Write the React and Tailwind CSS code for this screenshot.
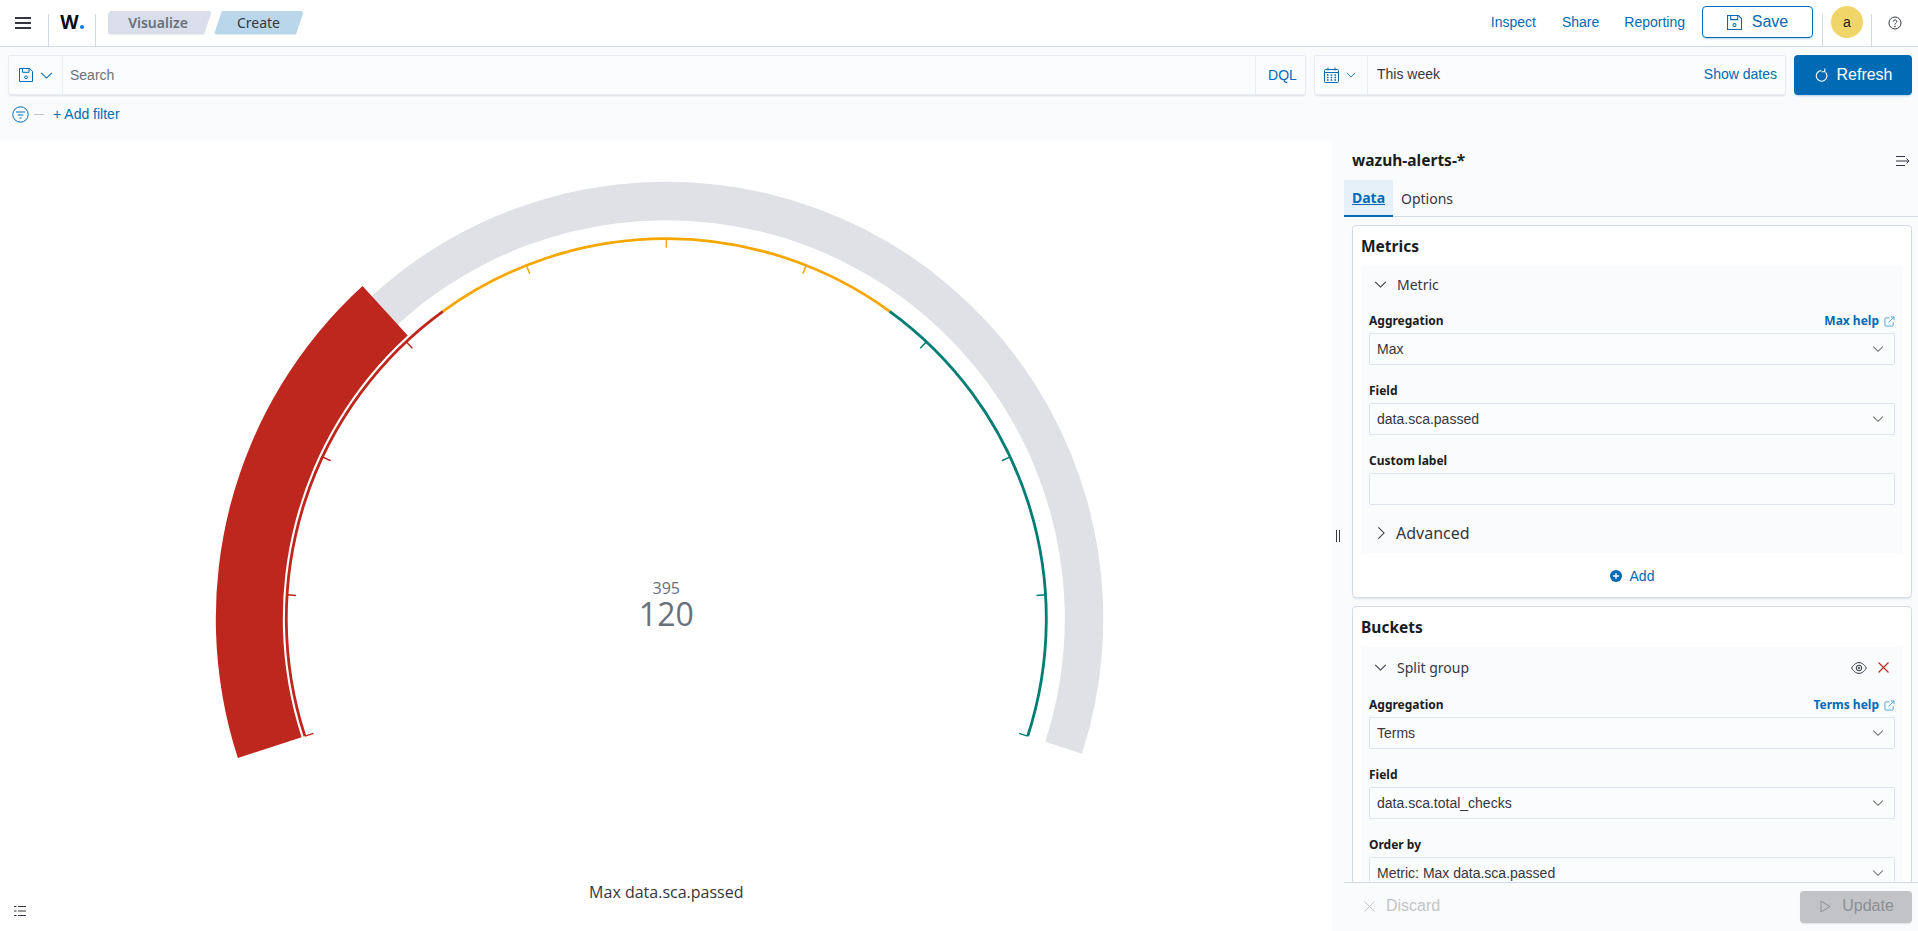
import React from "react";

const BLUE = "#006bb4";
const cx = 666.3, cy = 618.7;
const pt = (r, d) => {
  const a = (d * Math.PI) / 180;
  return [cx + r * Math.sin(a), cy - r * Math.cos(a)];
};
const arc = (r, a, b) => {
  const [x1, y1] = pt(r, a);
  const [x2, y2] = pt(r, b);
  return `M${x1} ${y1}A${r} ${r} 0 ${b - a > 180 ? 1 : 0} 1 ${x2} ${y2}`;
};
const band = (r1, r2, a, b) => {
  const [x1, y1] = pt(r2, a);
  const [x2, y2] = pt(r2, b);
  const [x3, y3] = pt(r1, b);
  const [x4, y4] = pt(r1, a);
  const l = b - a > 180 ? 1 : 0;
  return `M${x1} ${y1}A${r2} ${r2} 0 ${l} 1 ${x2} ${y2}L${x3} ${y3}A${r1} ${r1} 0 ${l} 0 ${x4} ${y4}Z`;
};
const RED = "#bd271e", ORANGE = "#f5a700", GREEN = "#017d73";
const ticks = [-108, -86.4, -64.8, -43.2, -21.6, 0, 21.6, 43.2, 64.8, 86.4, 108];
const tickColor = (d) => (d < -36 ? RED : d > 36 ? GREEN : ORANGE);

function Gauge() {
  return (
    <svg viewBox="0 140 1332 791" className="block w-full h-full">
      <path d={band(398.5, 437, -108, 108)} fill="#dfe1e6" />
      <path d={band(383.5, 450.5, -108, -42.4)} fill={RED} />
      <path d={arc(380, -108, -36)} stroke={RED} strokeWidth="2.8" fill="none" />
      <path d={arc(380, -36, 36)} stroke={ORANGE} strokeWidth="2.8" fill="none" />
      <path d={arc(380, 36, 108)} stroke={GREEN} strokeWidth="2.8" fill="none" />
      {ticks.map((d) => {
        const [x1, y1] = pt(380, d);
        const [x2, y2] = pt(371, d);
        return <line key={d} x1={x1} y1={y1} x2={x2} y2={y2} stroke={tickColor(d)} strokeWidth="1.5" />;
      })}
      <text x={cx} y="593.5" textAnchor="middle" fontFamily="'Open Sans',sans-serif" fontSize="16" fill="#69707d">395</text>
      <text x={cx} y="626" textAnchor="middle" fontFamily="'Open Sans',sans-serif" fontSize="32" fill="#69707d">120</text>
      <text x={cx} y="897.5" textAnchor="middle" fontFamily="'Open Sans',sans-serif" fontSize="16" fill="#343741">Max data.sca.passed</text>
    </svg>
  );
}

const Chevron = ({ className = "", color = "#343741", w = 12 }) => (
  <svg width={w} height={w} viewBox="0 0 16 16" fill="none" className={className}>
    <path d="M1.5 4.8 8 11.2l6.5-6.4" stroke={color} strokeWidth="1.3" />
  </svg>
);
const ChevronRight = () => (
  <svg width="14" height="14" viewBox="0 0 16 16" fill="none">
    <path d="M5 1.5 11.5 8 5 14.5" stroke="#343741" strokeWidth="1.2" />
  </svg>
);
const SaveIcon = ({ size = 14, color = BLUE }) => (
  <svg width={size} height={size} viewBox="0 0 14 14" fill="none" stroke={color} strokeWidth="1">
    <path d="M.5.5h10.2l2.8 2.8v10.2H.5z" />
    <path d="M3.5.5v3.8h6.5V.5" />
    <circle cx="7" cy="9.3" r="1.4" />
  </svg>
);
const External = () => (
  <svg width="11" height="11" viewBox="0 0 12 12" fill="none" stroke="#4d9fd6" strokeWidth="1">
    <path d="M6 2H2a1 1 0 0 0-1 1v7a1 1 0 0 0 1 1h7a1 1 0 0 0 1-1V7" />
    <path d="M5 7l6-6M7.5 1H11v3.5" />
  </svg>
);

const Label = ({ children, help }) => (
  <div className="flex items-center justify-between h-[20px] mb-[2px]">
    <span className="text-[12px] font-bold leading-[18px] text-[#1a1c21]">{children}</span>
    {help && (
      <span className="flex items-center gap-[5px] text-[12px] font-bold leading-[18px] text-[#006bb4]">
        {help} <External />
      </span>
    )}
  </div>
);

const Select = ({ value, className = "" }) => (
  <div className={`flex items-center justify-between h-[32px] border border-[#dfe5ef] rounded-[2px] bg-[#fbfcfd] pl-[7px] pr-[10px] font-['Liberation_Sans'] text-[14px] text-[#343741] ${className}`}>
    <span>{value}</span>
    {value !== null && <Chevron w={12} />}
  </div>
);

const Field = ({ label, help, value, last }) => (
  <div className={last ? "" : "mb-[16px]"}>
    <Label help={help}>{label}</Label>
    <Select value={value} />
  </div>
);

function Header() {
  return (
    <header className="h-[47px] shrink-0 flex items-stretch border-b border-[#d3dae6] bg-white">
      <div className="w-[48px] flex items-center justify-center pr-[2px]">
        <svg width="16" height="14" viewBox="0 0 16 14" fill="#343741">
          <rect y="1" width="16" height="2" /><rect y="6" width="16" height="2" /><rect y="11" width="16" height="2" />
        </svg>
      </div>
      <div className="w-[48px] mt-[14px] border-x border-[#d3dae6] flex items-start justify-center">
        <span className="-mt-[4px] text-[19px] leading-[24px] font-bold text-[#0b0c10] font-['Open_Sans']">W<span className="inline-block w-[4px] h-[4px] rounded-full bg-[#0a7cf0] ml-[1px]"></span></span>
      </div>
      <nav className="flex items-center ml-[12px] -mt-[1px] gap-[2px]">
        <span className="h-[24px] w-[104px] rounded-[4px] bg-[#d9deea] text-[#69707d] text-[14px] font-semibold flex items-center justify-center pr-[4px] [clip-path:polygon(0_0,100%_0,calc(100%-8px)_100%,0_100%)]">Visualize</span>
        <span className="h-[24px] w-[90px] rounded-[4px] bg-[#b9d6ea] text-[#343741] text-[14px] flex items-center justify-center pr-[1px] [clip-path:polygon(8px_0,100%_0,calc(100%-8px)_100%,0_100%)]">Create</span>
      </nav>
      <div className="flex-1" />
      <div className="flex items-center font-['Liberation_Sans'] text-[14px] text-[#006bb4] -mt-[2px]">
        <span className="mr-[26px]">Inspect</span>
        <span className="mr-[25px]">Share</span>
        <span className="mr-[17px]">Reporting</span>
        <span className="w-[111px] h-[32px] border border-[#006bb4] rounded-[4px] flex items-center justify-center gap-[10px] text-[16px] shadow-[0_2px_2px_-1px_rgba(0,107,180,0.3)]">
          <SaveIcon size={15} /> Save
        </span>
      </div>
      <div className="ml-[9px] w-[50px] mt-[14px] border-x border-[#d3dae6] flex items-start justify-center">
        <span className="-mt-[8px] w-[32px] h-[32px] rounded-full bg-[#f0d669] flex items-center justify-center font-['Liberation_Sans'] text-[14px] text-[#1a1c21]">a</span>
      </div>
      <div className="w-[46px] flex items-center justify-center -mt-[1px]">
        <svg width="14" height="14" viewBox="0 0 14 14" fill="none" stroke="#343741" strokeWidth="1">
          <circle cx="7" cy="7" r="6" />
          <path d="M5.2 5.6C5.2 3.4 8.8 3.4 8.8 5.5 8.8 6.9 7 6.9 7 8.6" />
          <circle cx="7" cy="10.3" r=".4" />
        </svg>
      </div>
    </header>
  );
}

function QueryBar() {
  return (
    <div className="h-[93px] shrink-0 bg-[#fafbfd] pl-[8px] pr-[6px] pt-[8px] font-['Liberation_Sans'] text-[14px]">
      <div className="flex items-stretch h-[40px]">
        <div className="w-[1298px] flex items-stretch border border-[#e9edf3] rounded-[2px] bg-[#fbfcfd] shadow-[0_2px_2px_-1px_rgba(152,162,179,0.3)]">
          <div className="w-[54px] flex items-center justify-center gap-[7px] pl-[1px] border-r border-[#e9edf3]">
            <SaveIcon size={14} />
            <Chevron color={BLUE} w={13} />
          </div>
          <span className="flex-1 flex items-center pl-[7px] text-[#69707d]">Search</span>
          <span className="w-[50px] flex items-center justify-center pl-[4px] border-l border-[#e9edf3] text-[#006bb4]">DQL</span>
        </div>
        <div className="ml-[8px] w-[472px] flex items-stretch border border-[#e9edf3] rounded-[2px] bg-[#fbfcfd] shadow-[0_2px_2px_-1px_rgba(152,162,179,0.3)]">
          <div className="w-[53px] flex items-center justify-center gap-[7px] pr-[2px] border-r border-[#e9edf3]">
            <svg width="15" height="16" viewBox="0 0 15 16" fill="none" stroke={BLUE} strokeWidth="1">
              <rect x=".5" y="2.5" width="14" height="13" rx="1" />
              <path d="M.5 5.5h14M4 .5v3M11 .5v3" />
              <path d="M3 8h1.5M6.7 8h1.5M10.5 8H12M3 10.5h1.5M6.7 10.5h1.5M10.5 10.5H12M3 13h1.5M6.7 13h1.5M10.5 13H12" strokeWidth="1.4" />
            </svg>
            <Chevron color={BLUE} w={10} />
          </div>
          <span className="flex-1 flex items-center pl-[9px] pb-[2px] text-[#343741]">This week</span>
          <span className="flex items-center pr-[8px] pb-[2px] text-[#006bb4]">Show dates</span>
        </div>
        <div className="ml-[8px] w-[118px] pl-[2px] rounded-[4px] bg-[#006bb4] text-white text-[16px] flex items-center justify-center gap-[8px] shadow-[0_2px_2px_-1px_rgba(0,107,180,0.3)]">
          <svg width="13" height="14" viewBox="0 0 13 14" fill="none" stroke="#fff" strokeWidth="1.1">
            <path d="M10.6 4.4A5.3 5.3 0 1 1 6.2 2.6" />
            <path d="M9.8.6v3.2H6.6" />
          </svg>
          Refresh
        </div>
      </div>
      <div className="flex items-center h-[20px] mt-[9px] pl-[4px] text-[#006bb4]">
        <svg width="17" height="17" viewBox="0 0 17 17" fill="none" stroke={BLUE} strokeWidth="1">
          <circle cx="8.5" cy="8.5" r="7.7" />
          <path d="M4 6h9M5.7 9h5.6M7.4 12h2.2" />
        </svg>
        <span className="ml-[5px] w-[10px] h-[1px] bg-[#c2c8d2]" />
        <span className="ml-[9px]">+ Add filter</span>
      </div>
    </div>
  );
}

function Panel() {
  return (
    <aside className="relative w-[586px] shrink-0 flex flex-col bg-[#fafbfd]">
      <span className="absolute left-[4px] top-[390px] w-[4px] h-[12px] border-x border-[#343741]" />
      <div className="flex-1 min-h-0 overflow-hidden">
        <div className="h-[40px] pl-[20px] pr-[7px] pt-[1px] flex items-center justify-between">
          <span className="text-[15.5px] font-bold text-[#1a1c21]">wazuh-alerts-*</span>
          <svg width="15" height="12" viewBox="0 0 15 12" fill="none" stroke="#343741" strokeWidth="1">
            <path d="M0 1.5h9M0 6h13M0 10.5h9M10.5 3.5 13 6l-2.5 2.5" />
          </svg>
        </div>
        <div className="ml-[12px] h-[37px] flex items-stretch border-b border-[#d3dae6]">
          <span className="w-[49px] h-[37px] flex items-center justify-center bg-[#e6f0f8] border-b-2 border-[#006bb4] text-[14px] font-bold underline text-[#006bb4]">Data</span>
          <span className="ml-[8px] flex items-center text-[14px] text-[#343741]">Options</span>
        </div>

        <div className="ml-[20px] mr-[6px] mt-[8px] bg-white border border-[#d3dae6] rounded-[4px] shadow-[0_2px_2px_-1px_rgba(152,162,179,0.3)] px-[8px]">
          <h3 className="h-[40px] pt-[1px] flex items-center text-[15.5px] font-bold text-[#1a1c21]">Metrics</h3>
          <div className="bg-[#fafbfd] rounded-[4px] px-[8px]">
            <div className="h-[38px] pb-[2px] flex items-center gap-[10px] pl-[5px] text-[14px] text-[#343741]">
              <Chevron w={13} /> Metric
            </div>
            <div className="pt-[7px]">
              <Field label="Aggregation" help="Max help" value="Max" />
              <Field label="Field" value="data.sca.passed" />
              <Label>Custom label</Label>
              <Select value={null} />
            </div>
            <div className="h-[38px] pb-[2px] mt-[10px] flex items-center gap-[8px] pl-[5px] text-[16px] text-[#343741]">
              <ChevronRight /> Advanced
            </div>
          </div>
          <div className="h-[44px] pt-[2px] flex items-center justify-center gap-[8px] font-['Liberation_Sans'] text-[14px] text-[#006bb4]">
            <svg width="12" height="12" viewBox="0 0 12 12">
              <circle cx="6" cy="6" r="6" fill={BLUE} />
              <path d="M6 3v6M3 6h6" stroke="#fff" strokeWidth="1.3" />
            </svg>
            Add
          </div>
        </div>

        <div className="ml-[20px] mr-[6px] mt-[8px] bg-white border border-[#d3dae6] rounded-[4px] px-[8px]">
          <h3 className="h-[40px] pt-[1px] flex items-center text-[15.5px] font-bold text-[#1a1c21]">Buckets</h3>
          <div className="bg-[#fafbfd] rounded-[4px] px-[8px]">
            <div className="h-[41px] flex items-center justify-between pl-[5px] pr-[6px] text-[14px] text-[#343741]">
              <span className="flex items-center gap-[10px]"><Chevron w={13} /> Split group</span>
              <span className="flex items-center gap-[11px]">
                <svg width="16" height="12" viewBox="0 0 16 12" fill="none" stroke="#343741" strokeWidth="1">
                  <path d="M.6 6C3 2.2 5.4.6 8 .6s5 1.6 7.4 5.4c-2.4 3.8-4.8 5.4-7.4 5.4S3 9.8.6 6z" />
                  <circle cx="8" cy="6" r="2.8" />
                  <circle cx="8" cy="6" r=".9" />
                </svg>
                <svg width="11" height="11" viewBox="0 0 11 11" stroke="#bd271e" strokeWidth="1.1"><path d="M.5.5l10 10M10.5.5l-10 10" /></svg>
              </span>
            </div>
            <div className="pt-[7px]">
              <Field label="Aggregation" help="Terms help" value="Terms" />
              <Field label="Field" value="data.sca.total_checks" />
              <Field label="Order by" value="Metric: Max data.sca.passed" />
            </div>
          </div>
        </div>
      </div>
      <div className="ml-[12px] h-[49px] shrink-0 border-t border-[#d3dae6] bg-[#fafbfd] flex items-center justify-between pr-[6px] font-['Liberation_Sans'] text-[16px]">
        <span className="flex items-center gap-[11px] pl-[20px] pb-[2px] text-[#c2c3c6]">
          <svg width="11" height="11" viewBox="0 0 11 11" stroke="#c2c3c6" strokeWidth="1"><path d="M.5.5l10 10M10.5.5l-10 10" /></svg>
          Discard
        </span>
        <span className="w-[112px] h-[32px] pb-[2px] pl-[2px] rounded-[4px] bg-[#c2c3c6] text-[#8b8f96] flex items-center justify-center gap-[11px] shadow-[0_2px_2px_-1px_rgba(152,162,179,0.3)]">
          <svg width="11" height="13" viewBox="0 0 11 13" fill="none" stroke="#8b8f96" strokeWidth="1"><path d="M1 1l9 5.5L1 12z" /></svg>
          Update
        </span>
      </div>
    </aside>
  );
}

export default function App() {
  return (
    <div className="w-[1918px] h-[931px] flex flex-col overflow-hidden bg-white font-['Noto_Sans',sans-serif]">
      <Header />
      <QueryBar />
      <div className="flex-1 min-h-0 flex">
        <main className="relative flex-1 min-w-0 bg-white">
          <Gauge />
          <svg width="12" height="12" viewBox="0 0 12 12" className="absolute left-[14px] bottom-[14px]" fill="none" stroke="#343741" strokeWidth="1.2">
            <path d="M4 1.5H12M4 6H12M4 10.5H12" />
            <path d="M0 1.5h2.5M0 6h2.5M0 10.5h2.5" />
          </svg>
        </main>
        <Panel />
      </div>
    </div>
  );
}
